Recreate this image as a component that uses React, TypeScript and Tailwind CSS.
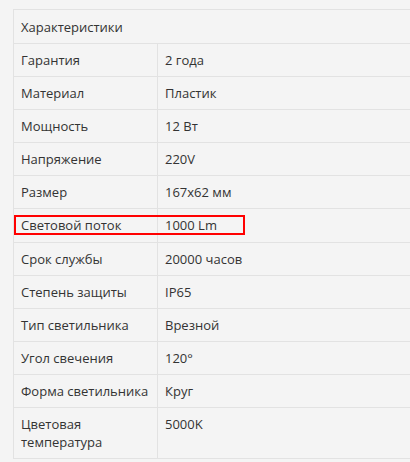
import React from "react";

const rows: [string, string][] = [
  ["Гарантия", "2 года"],
  ["Материал", "Пластик"],
  ["Мощность", "12 Вт"],
  ["Напряжение", "220V"],
  ["Размер", "167x62 мм"],
  ["Световой поток", "1000 Lm"],
  ["Срок службы", "20000 часов"],
  ["Степень защиты", "IP65"],
  ["Тип светильника", "Врезной"],
  ["Угол свечения", "120°"],
  ["Форма светильника", "Круг"],
  ["Цветовая температура", "5000K"],
];

export default function App() {
  return (
    <div
      className="w-[410px] h-[462px] overflow-hidden bg-[#f4f4f4] pl-[13px] pt-[9px] relative"
      style={{ fontFamily: '"Open Sans", "Noto Sans", sans-serif' }}
    >
      <table className="w-[420px] border-collapse text-[13px] leading-[18px] text-[#333]">
        <tbody>
          <tr>
            <td colSpan={2} className="border border-[#e2e2e2] px-[7px] pt-[8px] pb-[7px]">
              Характеристики
            </td>
          </tr>
          {rows.map(([k, v]) => (
            <tr key={k}>
              <td
                className={`border border-[#e2e2e2] px-[7px] w-[144px] align-top ${
                  k === "Световой поток" ? "pt-[7px] pb-[8px]" : "py-[7px]"
                }`}
              >
                {k === "Цветовая температура" ? (
                  <>
                    Цветовая
                    <br />
                    температура
                  </>
                ) : (
                  k
                )}
              </td>
              <td className="border border-[#e2e2e2] px-[7px] py-[7px] align-top">{v}</td>
            </tr>
          ))}
        </tbody>
      </table>
      <div className="absolute left-[14px] top-[215px] w-[231px] h-[20px] border-2 border-[#f00] pointer-events-none" />
    </div>
  );
}
